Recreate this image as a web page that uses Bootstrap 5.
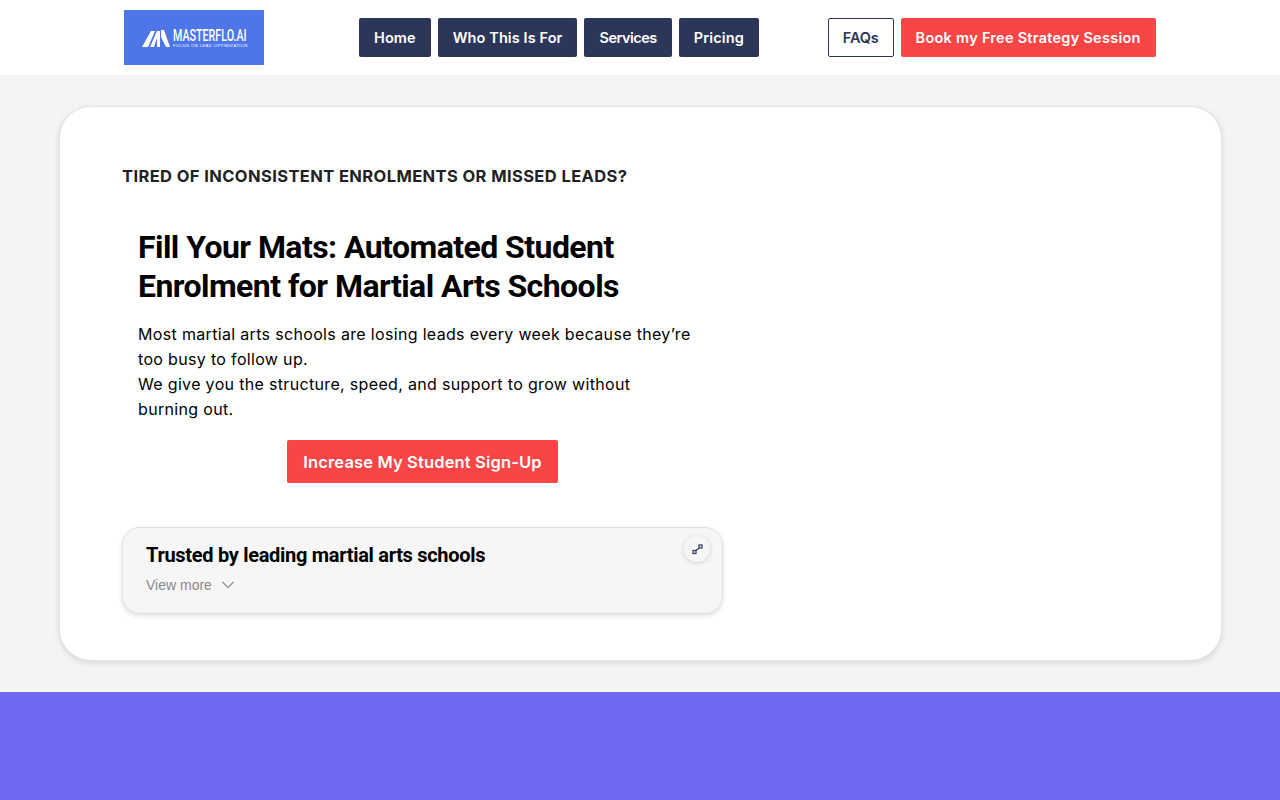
<!DOCTYPE html>
<html lang="en">
<head>
  <meta charset="UTF-8">
  <meta name="viewport" content="width=device-width, initial-scale=1.0">
  <title>Masterflo.ai</title>
  <link href="https://cdn.jsdelivr.net/npm/bootstrap@5.3.0/dist/css/bootstrap.min.css" rel="stylesheet">
  <style>
    body {
      background-color: #f3f4f6;
      font-family: "Inter", "Liberation Sans", sans-serif;
      color: #000;
    }
    .site-head {
      height: 75px;
      padding-left: 124px;
    }
    .brand-box {
      width: 140px;
      height: 55px;
      background-color: #4f76e8;
      margin-right: 95px;
      color: #fff;
      padding-left: 18px;
      gap: 3px;
    }
    .brand-name {
      font-family: "Roboto", sans-serif;
      font-weight: 500;
      font-size: 17px;
      line-height: 16px;
      transform: scaleX(.63);
      transform-origin: left center;
      white-space: nowrap;
      width: 74px;
    }
    .brand-tag {
      font-size: 4px;
      line-height: 5px;
      letter-spacing: .5px;
      white-space: nowrap;
      font-family: "Liberation Sans", sans-serif;
    }
    .head-btn {
      height: 39px;
      padding: 0 14px;
      font-size: 14.5px;
      font-weight: 600;
      letter-spacing: .1px;
      border-radius: 2px;
      color: #fff;
      display: flex;
      align-items: center;
      white-space: nowrap;
    }
    .head-btn-navy { background-color: #2c3659; }
    .head-btn-navy:hover { background-color: #2c3659; color: #fff; }
    .head-btn-line { background-color: #fff; border: 1px solid #2c3659; color: #2c3659; letter-spacing: -.15px; }
    .head-btn-red { background-color: #f94545; letter-spacing: .27px; }
    .head-btn-red:hover { background-color: #f94545; color: #fff; }
    .btn-tight { letter-spacing: -.5px; }
    .btn-loose { letter-spacing: .12px; }
    .right-group { margin-left: 69px; }
    .nav-gap { gap: 7px; }
    .hero-wrap { padding: 31px 58px 31px 59px; }
    .hero-panel {
      height: 555px;
      border-radius: 32px;
      border: 1px solid #e4e4e4;
      box-shadow: 0 2px 6px rgba(0, 0, 0, .12);
      padding: 58px 62px 0;
    }
    .eyebrow {
      font-size: 16.5px;
      font-weight: 700;
      line-height: 22px;
      letter-spacing: .4px;
      color: #222;
      margin-bottom: 41px;
    }
    .hero-copy {
      width: 600px;
      padding-left: 16px;
      padding-right: 15px;
    }
    .hero-title {
      font-family: "Roboto", sans-serif;
      font-size: 32px;
      font-weight: 700;
      line-height: 39px;
      margin-bottom: 16px;
      letter-spacing: -.55px;
    }
    .hero-text {
      font-size: 16px;
      line-height: 25px;
      letter-spacing: .33px;
      margin-right: 14px;
      margin-bottom: 18px;
    }
    .cta-red {
      width: 271px;
      height: 43px;
      background-color: #f94545;
      color: #fff;
      font-size: 16.5px;
      font-weight: 600;
      letter-spacing: .15px;
      border-radius: 2px;
      padding: 0;
      line-height: 43px;
    }
    .cta-red:hover { background-color: #f94545; color: #fff; }
    .trust-box {
      width: 601px;
      height: 87px;
      margin-top: 44px;
      background-color: #f6f6f6;
      border: 1px solid #e2e2e2;
      border-radius: 18px;
      box-shadow: 0 2px 5px rgba(0, 0, 0, .12);
      padding: 14px 23px;
    }
    .trust-title {
      font-family: "Roboto", sans-serif;
      font-size: 20px;
      font-weight: 700;
      line-height: 26px;
      margin-bottom: 8px;
      letter-spacing: -.3px;
    }
    .view-more {
      font-family: "Liberation Sans", sans-serif;
      font-size: 14px;
      line-height: 18px;
      color: #8a8a8a;
      gap: 9px;
    }
    .expand-btn {
      position: absolute;
      top: 8px;
      right: 12px;
      width: 26px;
      height: 26px;
      border-radius: 50%;
      background-color: #f6f6f6;
      box-shadow: 0 1px 5px rgba(0, 0, 0, .15);
    }
    .purple-band {
      height: 108px;
      background-color: #6f69f5;
    }
  </style>
</head>
<body>
  <header class="site-head bg-white d-flex align-items-center">
    <a href="#" class="brand-box d-flex align-items-center text-decoration-none">
      <svg width="28" height="18" viewBox="0 0 28 18" fill="#fff">
        <polygon points="0,18 9,2 13,2 6,18"/>
        <polygon points="8,18 15,2 18,2 18,18 15,18 15,9 12,18"/>
        <polygon points="19,1 22,1 28,18 24,18 19,8"/>
      </svg>
      <span>
        <span class="brand-name d-block">MASTERFLO.AI</span>
        <span class="brand-tag d-block">FOCUS ON LEAD OPTIMIZATION</span>
      </span>
    </a>
    <nav class="d-flex nav-gap">
      <a href="#" class="btn head-btn head-btn-navy">Home</a>
      <a href="#" class="btn head-btn head-btn-navy">Who This Is For</a>
      <a href="#" class="btn head-btn head-btn-navy btn-tight">Services</a>
      <a href="#" class="btn head-btn head-btn-navy btn-loose">Pricing</a>
    </nav>
    <div class="d-flex nav-gap right-group">
      <a href="#" class="btn head-btn head-btn-line">FAQs</a>
      <a href="#" class="btn head-btn head-btn-red">Book my Free Strategy Session</a>
    </div>
  </header>

  <main class="hero-wrap">
    <section class="hero-panel bg-white">
      <p class="eyebrow">TIRED OF INCONSISTENT ENROLMENTS OR MISSED LEADS?</p>
      <div class="hero-copy">
        <h1 class="hero-title">Fill Your Mats: Automated Student Enrolment for Martial Arts Schools</h1>
        <p class="hero-text">Most martial arts schools are losing leads every week because they’re too busy to follow up.<br>We give you the structure, speed, and support to grow without burning out.</p>
        <div class="text-center">
          <a href="#" class="btn cta-red">Increase My Student Sign-Up</a>
        </div>
      </div>
      <div class="trust-box position-relative">
        <div class="trust-title">Trusted by leading martial arts schools</div>
        <div class="view-more d-flex align-items-center">
          View more
          <svg width="14" height="8" viewBox="0 0 14 8" fill="none" stroke="#8a8a8a" stroke-width="1.1"><path d="M1.5 1l5.5 5.5L12.500 1"/></svg>
        </div>
        <span class="expand-btn d-flex align-items-center justify-content-center">
          <svg width="11" height="11" viewBox="0 0 11 11" fill="none" stroke="#2c3659" stroke-width="1.2">
            <rect x="1" y="6.500" width="3" height="3"/>
            <rect x="7" y="1" width="3" height="3"/>
            <path d="M4 6.500L7 4"/>
          </svg>
        </span>
      </div>
    </section>
  </main>

  <div class="purple-band"></div>

  <script src="https://cdn.jsdelivr.net/npm/bootstrap@5.3.0/dist/js/bootstrap.bundle.min.js"></script>
</body>
</html>
